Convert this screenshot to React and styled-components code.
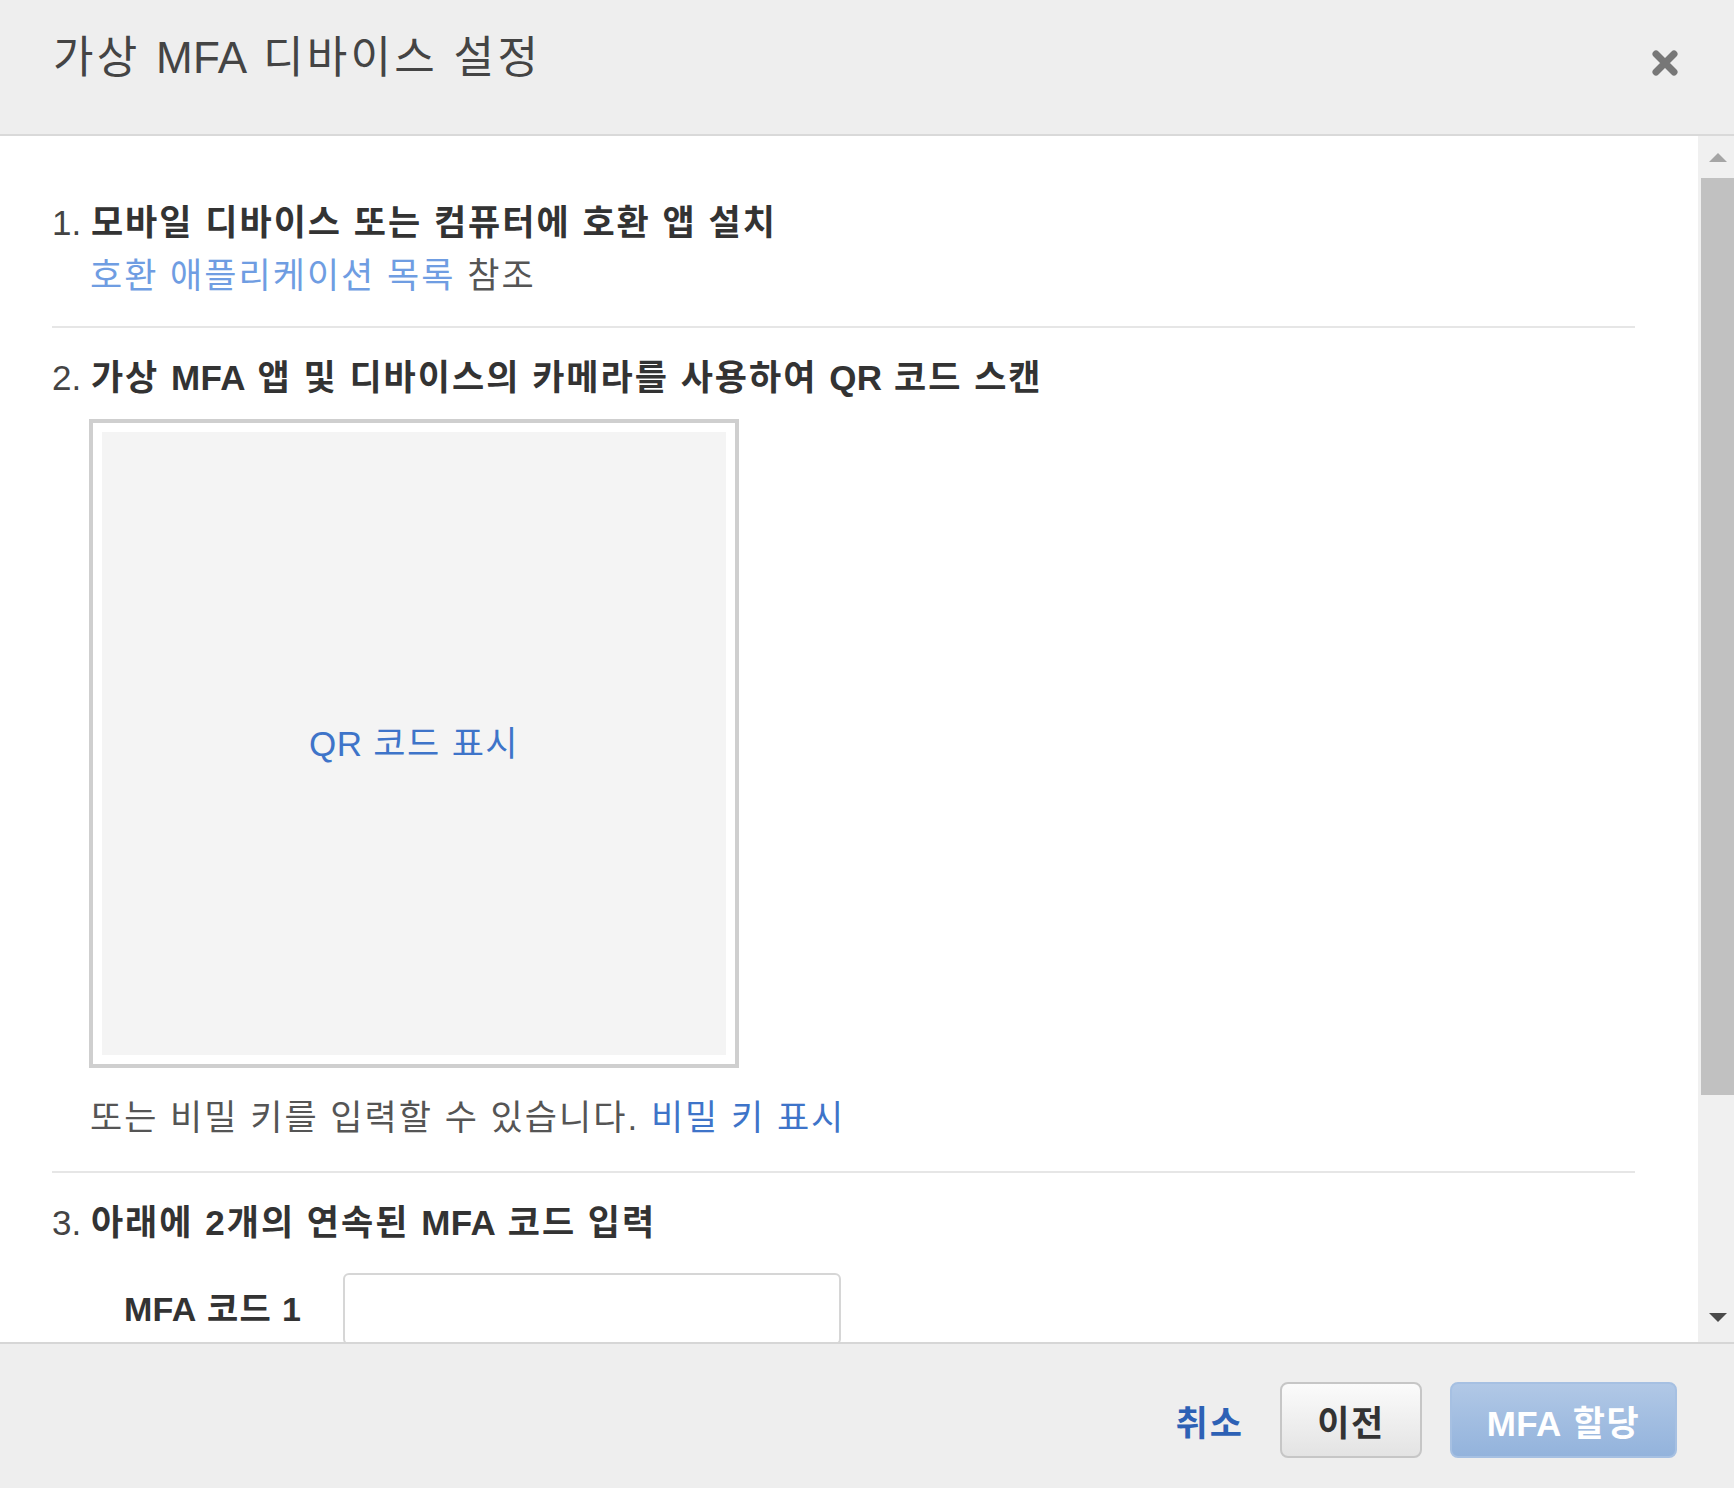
import React from 'react'
import styled, { createGlobalStyle } from 'styled-components'

const GlobalStyle = createGlobalStyle`
    html, body {
        margin: 0;
        padding: 0;
        background: #eeeeee;
    }
    * {
        box-sizing: border-box;
    }
`

const FONT = `"Liberation Sans", "Noto Sans CJK KR", Arial, sans-serif`

const Dialog = styled.div`
    width: 100%;
    height: 100vh;
    display: flex;
    flex-direction: column;
    font-family: ${FONT};
    letter-spacing: 2px;
    color: #444;
`

const Header = styled.div`
    height: 136px;
    flex-shrink: 0;
    display: flex;
    justify-content: space-between;
    align-items: flex-start;
    padding: 32px 55px 0 53px;
    background: #eeeeee;
    border-bottom: 2px solid #d9d9d9;
`

const Title = styled.h1`
    margin: 0;
    font-size: 44px;
    line-height: 52px;
    font-weight: 400;
    letter-spacing: 3.3px;
    color: #444;
`

// latin words (MFA, QR) sit tighter than the hangul around them
const Latin = styled.span`
    letter-spacing: 0.3px;
`

const CloseButton = styled.button`
    margin-top: 17px;
    padding: 0;
    border: 0;
    background: none;
    width: 28px;
    height: 28px;
    cursor: pointer;
`

const Body = styled.div`
    height: 1206px;
    flex-shrink: 0;
    display: flex;
    background: #fff;
    overflow: hidden;
`

const Content = styled.div`
    flex: 1;
    padding: 37px 63px 0 52px;
    overflow: hidden;
`

const Section = styled.section`
    padding: 25px 0 28px;
    border-bottom: ${p => (p.$last ? 'none' : '2px solid #e6e6e6')};
`

const StepTitle = styled.h2`
    margin: 0;
    font-size: 35px;
    line-height: 50px;
    font-weight: 700;
    color: #333;
`

const Num = styled.span`
    font-weight: 400;
    letter-spacing: 0;
    color: #444;
`

const Indent = styled.div`
    padding-left: 38px;
    margin-top: ${p => p.$nudge || 0}px;
    margin-bottom: ${p => -(p.$nudge || 0)}px;
    font-size: 35px;
    line-height: 50px;
    color: #555;
`

const Link = styled.a`
    color: ${p => p.$light ? '#6f9de2' : '#3e74c9'};
    text-decoration: none;
    cursor: pointer;
`

const QrFrame = styled.div`
    margin: 16px 0 25px 37px;
    width: 650px;
    height: 649px;
    padding: 9px;
    border: 4px solid #cfcfcf;
    background: #fff;
`

const QrInner = styled.div`
    width: 100%;
    height: 100%;
    background: #f4f4f4;
    display: flex;
    align-items: center;
    justify-content: center;
    padding-bottom: 6px;
    font-size: 35px;
    letter-spacing: 1.4px;
`

const FieldRow = styled.div`
    display: grid;
    grid-template-columns: 219px 498px;
    align-items: center;
    margin-top: 25px;
    padding-left: 72px;
`

const Label = styled.label`
    font-size: 34px;
    font-weight: 700;
    letter-spacing: 1px;
    color: #333;
    padding-bottom: 6px;
`

const Input = styled.input`
    height: 72px;
    border: 2px solid #d6d6d6;
    border-radius: 6px;
    font-family: ${FONT};
    font-size: 32px;
    padding: 0 14px;
    outline: none;
`

const ScrollBar = styled.div`
    width: 36px;
    flex-shrink: 0;
    display: flex;
    flex-direction: column;
    background: #f0f0f0;
    padding-left: 3px;
`

const ArrowBox = styled.div`
    height: ${p => p.$h}px;
    display: flex;
    align-items: ${p => (p.$down ? 'flex-end' : 'flex-start')};
    justify-content: center;
    padding: ${p => (p.$down ? '0 0 19px 0' : '17px 0 0 0')};
    flex-shrink: 0;
`

const Thumb = styled.div`
    height: 917px;
    flex-shrink: 0;
    background: #c1c1c1;
`

const Spacer = styled.div`
    flex: 1;
`

const Footer = styled.div`
    flex: 1;
    display: flex;
    justify-content: flex-end;
    align-items: flex-start;
    padding: 38px 57px 0 0;
    background: #eeeeee;
    border-top: 2px solid #d6d6d6;
`

const CancelLink = styled.a`
    height: 76px;
    display: flex;
    align-items: center;
    margin-right: 36px;
    font-size: 35px;
    font-weight: 700;
    color: #2d61b5;
    cursor: pointer;
`

const Button = styled.button`
    height: 76px;
    width: ${p => (p.$primary ? 227 : 142)}px;
    padding: 0;
    margin-left: ${p => (p.$primary ? 28 : 0)}px;
    border-radius: 8px;
    font-family: ${FONT};
    font-size: 35px;
    font-weight: 700;
    letter-spacing: 1.5px;
    cursor: pointer;
    color: ${p => (p.$primary ? '#ffffff' : '#333')};
    border: 2px solid ${p => (p.$primary ? '#a6c0e2' : '#c6c6c6')};
    background: ${p =>
        p.$primary
            ? 'linear-gradient(#b1c8e6, #93b3dc)'
            : 'linear-gradient(#fbfbfb, #e3e3e3)'};
`

const Triangle = ({ down }) => (
    <svg width="18" height="10" viewBox="0 0 18 10">
        <polygon
            points={down ? '0,0 18,0 9,9' : '9,0 18,9 0,9'}
            fill={down ? '#4a4a4a' : '#a5a5a5'}
        />
    </svg>
)

const App = () => {
    return (
        <Dialog>
            <GlobalStyle />
            <Header>
                <Title>가상 <Latin>MFA</Latin> 디바이스 설정</Title>
                <CloseButton aria-label="닫기">
                    <svg width="28" height="28" viewBox="0 0 28 28">
                        <path d="M5 5 L23 23 M23 5 L5 23" stroke="#777" strokeWidth="7" strokeLinecap="round" />
                    </svg>
                </CloseButton>
            </Header>
            <Body>
                <Content>
                    <Section>
                        <StepTitle><Num>1. </Num>모바일 디바이스 또는 컴퓨터에 호환 앱 설치</StepTitle>
                        <Indent $nudge={3}>
                            <Link $light>호환 애플리케이션 목록</Link> 참조
                        </Indent>
                    </Section>
                    <Section>
                        <StepTitle>
                            <Num>2. </Num>가상 <Latin>MFA</Latin> 앱 및 디바이스의 카메라를 사용하여 <Latin>QR</Latin> 코드 스캔
                        </StepTitle>
                        <QrFrame>
                            <QrInner>
                                <Link><Latin>QR</Latin> 코드 표시</Link>
                            </QrInner>
                        </QrFrame>
                        <Indent>
                            또는 비밀 키를 입력할 수 있습니다. <Link>비밀 키 표시</Link>
                        </Indent>
                    </Section>
                    <Section $last>
                        <StepTitle><Num>3. </Num>아래에 2개의 연속된 <Latin>MFA</Latin> 코드 입력</StepTitle>
                        <FieldRow>
                            <Label><Latin>MFA</Latin> 코드 1</Label>
                            <Input />
                        </FieldRow>
                    </Section>
                </Content>
                <ScrollBar>
                    <ArrowBox $h={42}><Triangle /></ArrowBox>
                    <Thumb />
                    <Spacer />
                    <ArrowBox $h={40} $down><Triangle down /></ArrowBox>
                </ScrollBar>
            </Body>
            <Footer>
                <CancelLink>취소</CancelLink>
                <Button>이전</Button>
                <Button $primary><Latin>MFA</Latin> 할당</Button>
            </Footer>
        </Dialog>
    )
}

export default App
